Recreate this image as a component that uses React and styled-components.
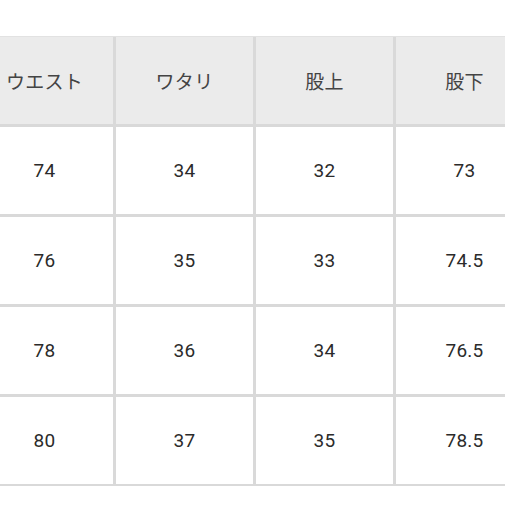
import React from 'react';
import styled, { createGlobalStyle } from 'styled-components';

const GlobalStyle = createGlobalStyle`
  html, body {
    margin: 0;
    padding: 0;
    background: #ffffff;
    overflow: hidden;
  }
  body {
    font-family: Roboto, "Noto Sans CJK JP", "Noto Sans", sans-serif;
  }
`;

const Page = styled.div`
  width: 505px;
  height: 505px;
  overflow: hidden;
  padding-top: 36px;
  box-sizing: border-box;
`;

const Table = styled.div`
  display: grid;
  grid-template-columns: repeat(4, 137px);
  grid-auto-rows: 87px;
  gap: 3px;
  width: max-content;
  margin-left: -24px;
  padding-bottom: 2px;
  background: #d9d9d9;
  border-top: 1px solid #e2e2e2;
`;

const Cell = styled.div`
  display: flex;
  align-items: center;
  justify-content: center;
  background: ${({ $head }) => ($head ? '#ebebeb' : '#ffffff')};
  color: ${({ $head }) => ($head ? '#444444' : '#2b2b2b')};
  font-size: 19px;
  letter-spacing: ${({ $head }) => ($head ? '0.3px' : '0.2px')};
`;

const headers = ['ウエスト', 'ワタリ', '股上', '股下'];

const rows = [
  ['74', '34', '32', '73'],
  ['76', '35', '33', '74.5'],
  ['78', '36', '34', '76.5'],
  ['80', '37', '35', '78.5'],
];

export default function App() {
  return (
    <Page>
      <GlobalStyle />
      <Table>
        {headers.map((h) => (
          <Cell $head key={h}>{h}</Cell>
        ))}
        {rows.map((row, i) =>
          row.map((v, j) => <Cell key={`${i}-${j}`}>{v}</Cell>)
        )}
      </Table>
    </Page>
  );
}
